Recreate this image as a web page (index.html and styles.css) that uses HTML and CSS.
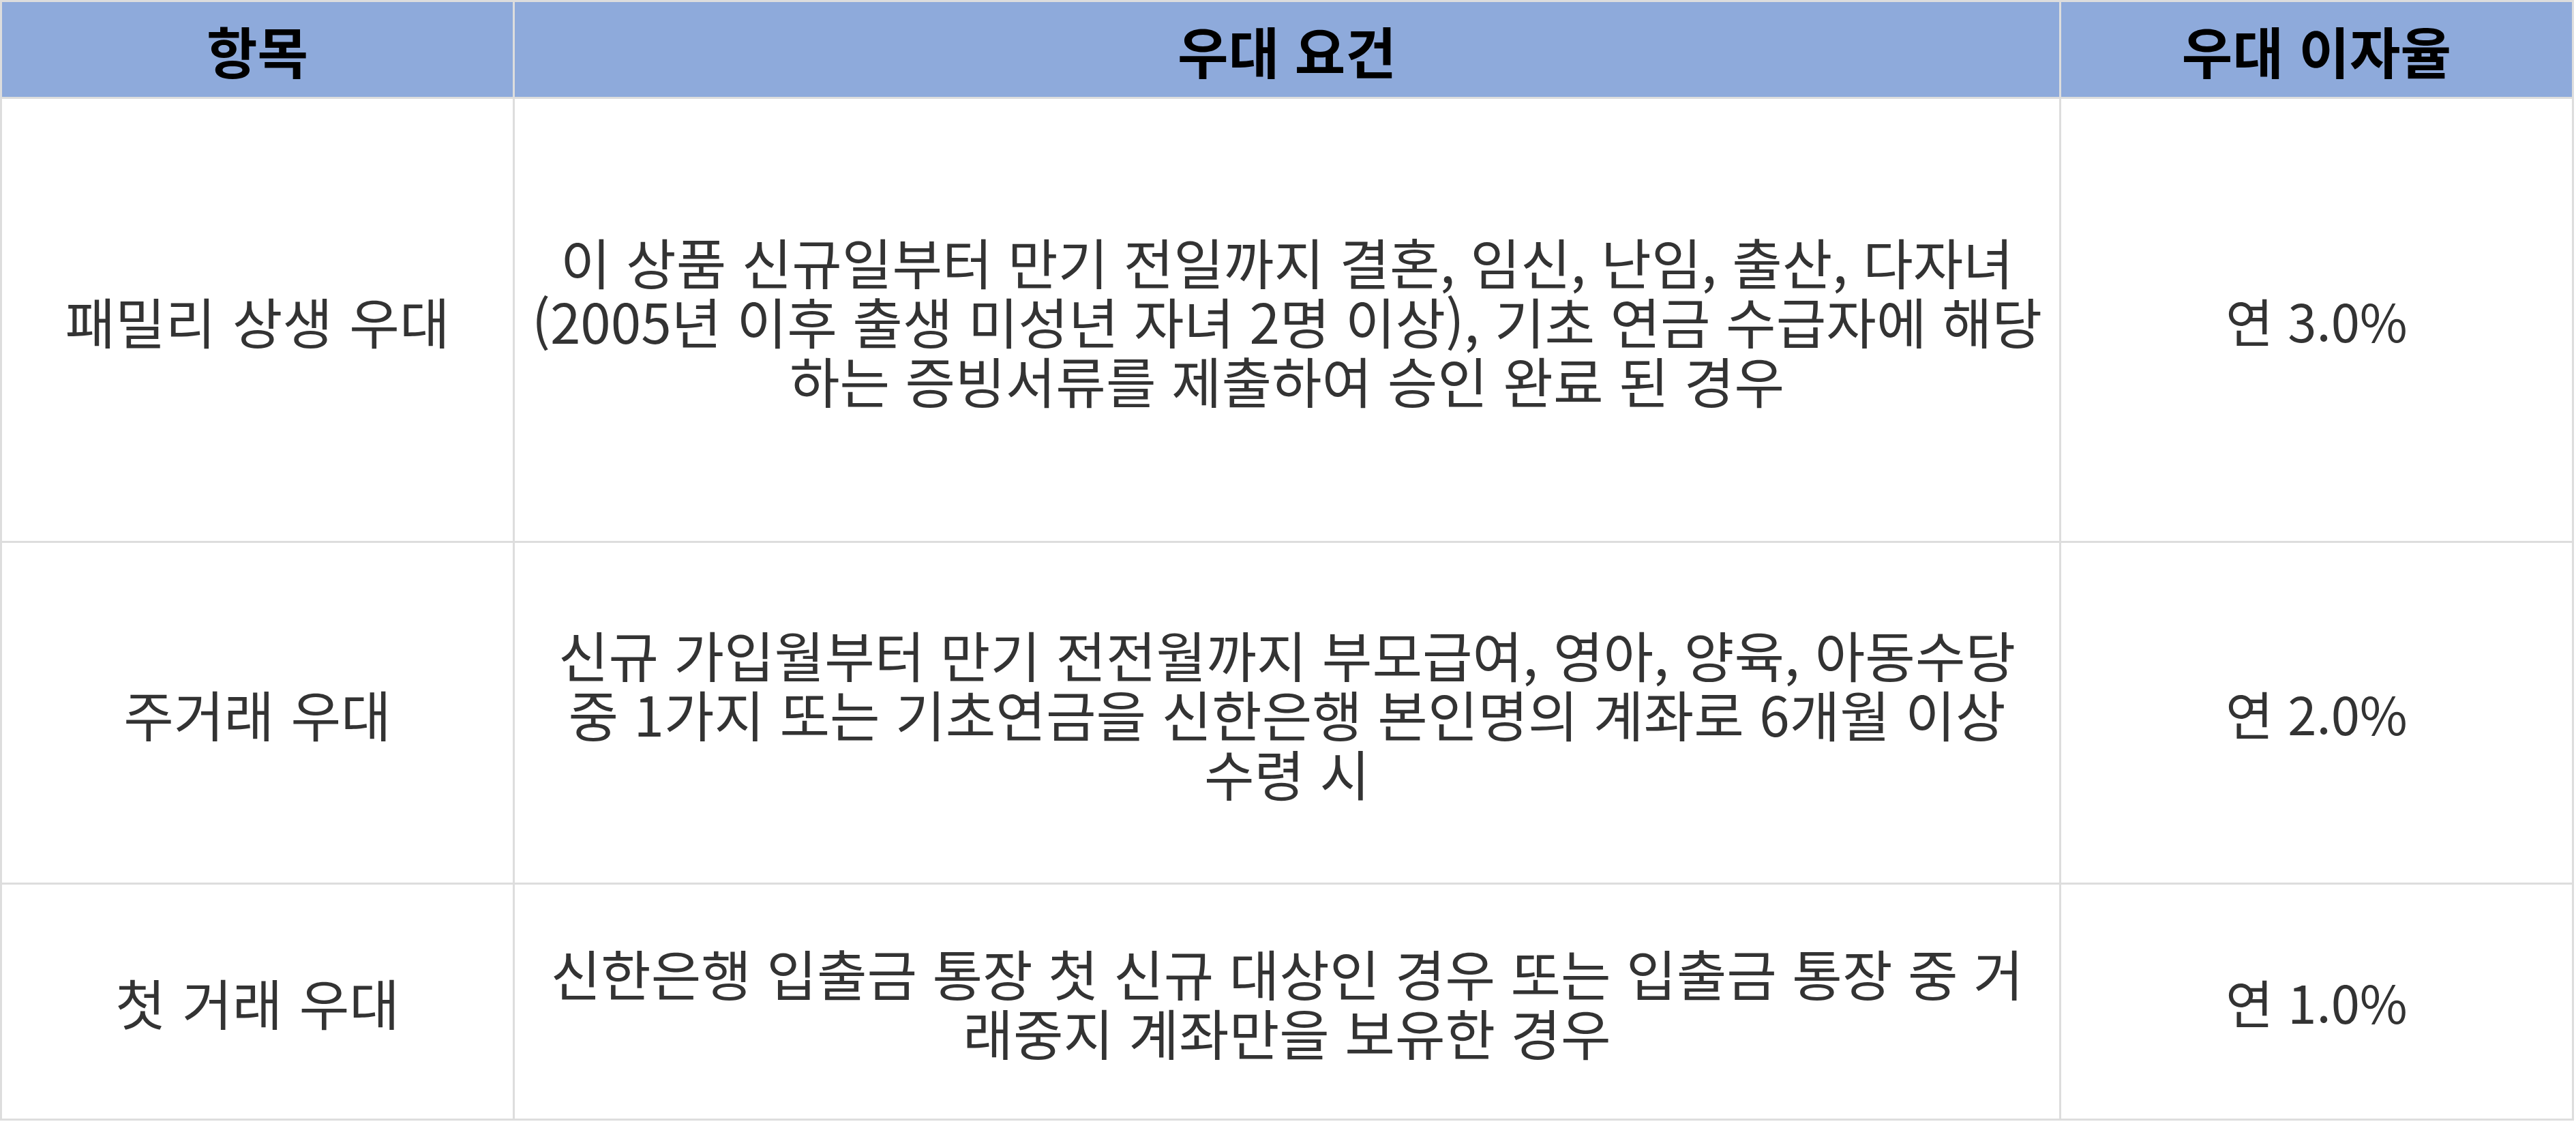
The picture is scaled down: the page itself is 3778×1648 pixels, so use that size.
FILE: index.html
```html
<!DOCTYPE html>
<html lang="ko">
<head>
<meta charset="utf-8">
<title>우대 이자율</title>
<link rel="stylesheet" href="styles.css">
</head>
<body>
<table class="rate-table">
  <colgroup>
    <col class="col-item">
    <col class="col-cond">
    <col class="col-rate">
  </colgroup>
  <thead>
    <tr class="head-row">
      <th>항목</th>
      <th>우대 요건</th>
      <th>우대 이자율</th>
    </tr>
  </thead>
  <tbody>
    <tr class="row-1">
      <td class="item">패밀리 상생 우대</td>
      <td class="cond">이 상품 신규일부터 만기 전일까지 결혼, 임신, 난임, 출산, 다자녀<br>(2005년 이후 출생 미성년 자녀 2명 이상), 기초 연금 수급자에 해당<br>하는 증빙서류를 제출하여 승인 완료 된 경우</td>
      <td class="rate">연 3.0%</td>
    </tr>
    <tr class="row-2">
      <td class="item">주거래 우대</td>
      <td class="cond">신규 가입월부터 만기 전전월까지 부모급여, 영아, 양육, 아동수당<br>중 1가지 또는 기초연금을 신한은행 본인명의 계좌로 6개월 이상<br>수령 시</td>
      <td class="rate">연 2.0%</td>
    </tr>
    <tr class="row-3">
      <td class="item">첫 거래 우대</td>
      <td class="cond">신한은행 입출금 통장 첫 신규 대상인 경우 또는 입출금 통장 중 거<br>래중지 계좌만을 보유한 경우</td>
      <td class="rate">연 1.0%</td>
    </tr>
  </tbody>
</table>
</body>
</html>
```

FILE: styles.css
```css
html, body {
  margin: 0;
  padding: 0;
  background: #ffffff;
}

body {
  font-family: "Noto Sans CJK KR", "Noto Sans", sans-serif;
  color: #333333;
}

.rate-table {
  table-layout: fixed;
  width: 3775px;
  border-collapse: separate;
  border-spacing: 3px;
  background: #dddddd;
}

.col-item { width: 749px; }
.col-cond { width: 2265px; }
.col-rate { width: 749px; }

.rate-table th,
.rate-table td {
  padding: 0;
  text-align: center;
  vertical-align: middle;
  white-space: nowrap;
}

.rate-table th {
  background: #8eaadb;
  color: #000000;
  font-weight: 700;
  font-size: 81px;
  line-height: 92px;
}

.rate-table td {
  background: #ffffff;
  font-size: 80px;
  line-height: 87px;
  font-weight: 400;
}

.rate-table td.item {
  word-spacing: 2px;
}

.rate-table td.rate {
  font-size: 76px;
}

.head-row { height: 139px; }
.row-1 { height: 648px; }
.row-2 { height: 498px; }
.row-3 { height: 343px; }
```
